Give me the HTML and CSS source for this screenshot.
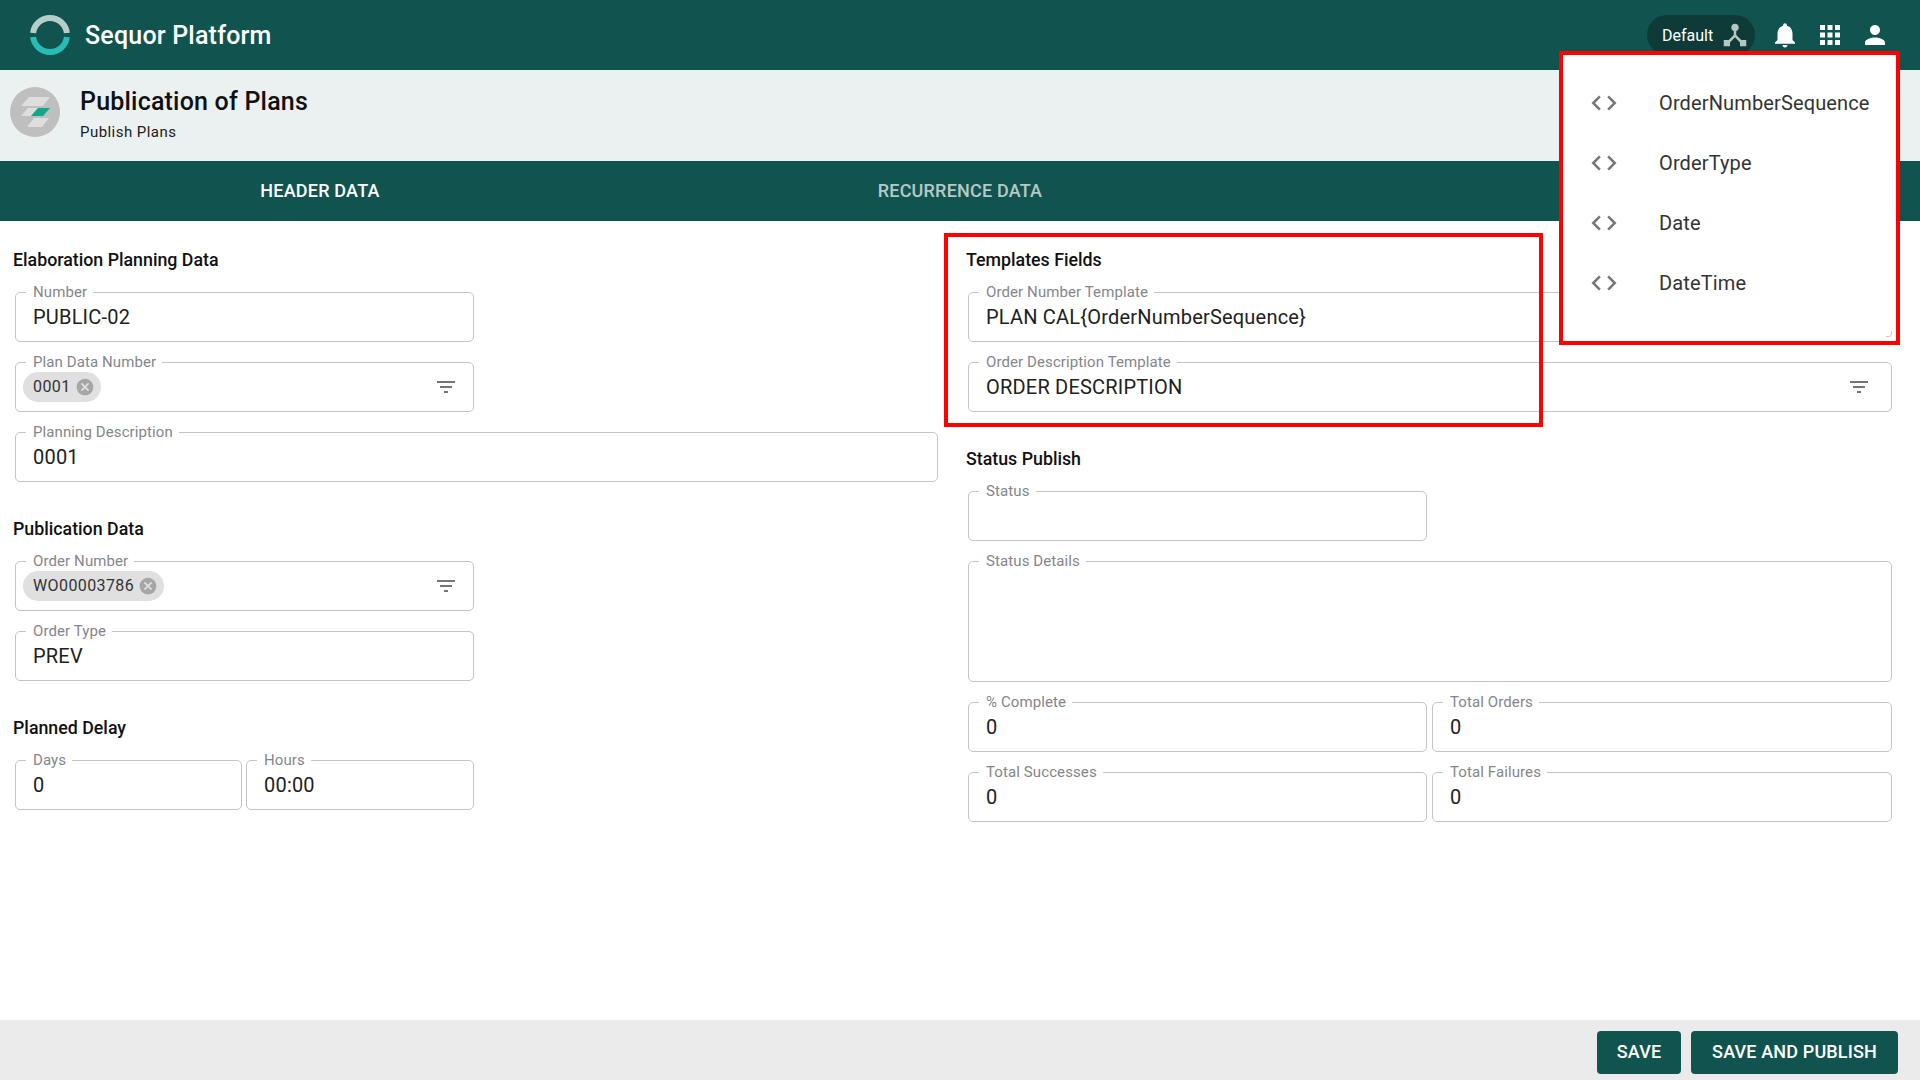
FILE: index.html
```html
<!DOCTYPE html>
<html lang="en">
<head>
  <meta charset="UTF-8" />
  <meta name="viewport" content="width=device-width, initial-scale=1.0"/>
  <title>Publication of Plans</title>
  <link rel="stylesheet" href="styles.css">
</head>
<body>

  <header class="topbar">
    <svg class="logo" viewBox="0 0 40 40">
      <path class="logo-top" d="M3.12 18A17 17 0 0 1 36.88 18"/>
      <path class="logo-bottom" d="M3.12 22A17 17 0 0 0 36.88 22"/>
    </svg>
    <div class="brand">Sequor Platform</div>
    <div class="topbar-right">
      <div class="env-pill">
        <span>Default</span>
        <svg class="icon icon-hub" viewBox="0 0 24 24"><path d="M17 16l-4-4V8.82C14.16 8.4 15 7.3 15 6c0-1.66-1.34-3-3-3S9 4.34 9 6c0 1.3.84 2.4 2 2.82V12l-4 4H3v5h5v-3.05l4-4.2 4 4.2V21h5v-5h-4z"/></svg>
      </div>
      <svg class="icon" viewBox="0 0 24 24"><path d="M12 22c1.1 0 2-.9 2-2h-4c0 1.1.89 2 2 2zm6-6v-5c0-3.07-1.64-5.64-4.5-6.32V4c0-.83-.67-1.5-1.5-1.5s-1.5.67-1.5 1.5v.68C7.63 5.36 6 7.92 6 11v5l-2 2v1h16v-1l-2-2z"/></svg>
      <svg class="icon" viewBox="0 0 24 24"><path d="M4 8h4V4H4v4zm6 12h4v-4h-4v4zm-6 0h4v-4H4v4zm0-6h4v-4H4v4zm6 0h4v-4h-4v4zm6-10v4h4V4h-4zm-6 4h4V4h-4v4zm6 6h4v-4h-4v4zm0 6h4v-4h-4v4z"/></svg>
      <svg class="icon" viewBox="0 0 24 24"><path d="M12 12c2.21 0 4-1.79 4-4s-1.79-4-4-4-4 1.79-4 4 1.79 4 4 4zm0 2c-2.67 0-8 1.34-8 4v2h16v-2c0-2.66-5.33-4-8-4z"/></svg>
    </div>
  </header>

  <div class="page-head">
    <svg class="avatar" viewBox="0 0 50 50">
      <circle cx="25" cy="25" r="25" fill="#bfbfbf"/>
      <polygon fill="#dedede" points="11,19 19,10 40,10 33,19"/>
      <polygon fill="#dedede" points="11,29 18,21 28,21 21,29"/>
      <polygon fill="#10a888" points="21,29 28,21 40,21 33,29"/>
      <polygon fill="#dedede" points="17,40 24,31 39,31 32,40"/>
    </svg>
    <div>
      <div class="page-title">Publication of Plans</div>
      <div class="page-sub">Publish Plans</div>
    </div>
  </div>

  <nav class="tabs">
    <div class="tab active">HEADER DATA</div>
    <div class="tab">RECURRENCE DATA</div>
    <div class="tab"></div>
  </nav>

  <main class="content">
    <div class="col">
      <h2 class="section-title">Elaboration Planning Data</h2>
      <div class="narrow">
        <div class="field"><span class="field-label">Number</span><span class="value">PUBLIC-02</span></div>
        <div class="field chip-field">
          <span class="field-label">Plan Data Number</span>
          <span class="chip"><span class="chip-text">0001</span>
            <svg class="chip-x" viewBox="0 0 24 24"><path d="M12 2C6.47 2 2 6.47 2 12s4.47 10 10 10 10-4.47 10-10S17.53 2 12 2zm5 13.59L15.59 17 12 13.41 8.41 17 7 15.59 10.59 12 7 8.41 8.41 7 12 10.59 15.59 7 17 8.41 13.41 12 17 15.59z"/></svg>
          </span>
          <svg class="filter" viewBox="0 0 24 24"><path d="M10 18h4v-2h-4v2zM3 6v2h18V6H3zm3 7h12v-2H6v2z"/></svg>
        </div>
      </div>
      <div class="field"><span class="field-label">Planning Description</span><span class="value">0001</span></div>

      <h2 class="section-title spaced">Publication Data</h2>
      <div class="narrow">
        <div class="field chip-field">
          <span class="field-label">Order Number</span>
          <span class="chip"><span class="chip-text">WO00003786</span>
            <svg class="chip-x" viewBox="0 0 24 24"><path d="M12 2C6.47 2 2 6.47 2 12s4.47 10 10 10 10-4.47 10-10S17.53 2 12 2zm5 13.59L15.59 17 12 13.41 8.41 17 7 15.59 10.59 12 7 8.41 8.41 7 12 10.59 15.59 7 17 8.41 13.41 12 17 15.59z"/></svg>
          </span>
          <svg class="filter" viewBox="0 0 24 24"><path d="M10 18h4v-2h-4v2zM3 6v2h18V6H3zm3 7h12v-2H6v2z"/></svg>
        </div>
        <div class="field"><span class="field-label">Order Type</span><span class="value">PREV</span></div>
      </div>

      <h2 class="section-title spaced">Planned Delay</h2>
      <div class="narrow pair">
        <div class="field"><span class="field-label">Days</span><span class="value">0</span></div>
        <div class="field"><span class="field-label">Hours</span><span class="value">00:00</span></div>
      </div>
    </div>

    <div class="col">
      <h2 class="section-title">Templates Fields</h2>
      <div class="field"><span class="field-label">Order Number Template</span><span class="value">PLAN CAL{OrderNumberSequence}</span></div>
      <div class="field">
        <span class="field-label">Order Description Template</span>
        <span class="value">ORDER DESCRIPTION</span>
        <svg class="filter filter-wide" viewBox="0 0 24 24"><path d="M10 18h4v-2h-4v2zM3 6v2h18V6H3zm3 7h12v-2H6v2z"/></svg>
      </div>

      <h2 class="section-title spaced">Status Publish</h2>
      <div class="narrow">
        <div class="field"><span class="field-label">Status</span></div>
      </div>
      <div class="field field-tall"><span class="field-label">Status Details</span></div>
      <div class="pair">
        <div class="field"><span class="field-label">% Complete</span><span class="value">0</span></div>
        <div class="field"><span class="field-label">Total Orders</span><span class="value">0</span></div>
      </div>
      <div class="pair">
        <div class="field"><span class="field-label">Total Successes</span><span class="value">0</span></div>
        <div class="field"><span class="field-label">Total Failures</span><span class="value">0</span></div>
      </div>
    </div>
  </main>

  <footer class="actions">
    <button class="btn">SAVE</button>
    <button class="btn btn-wide">SAVE AND PUBLISH</button>
  </footer>

  <div class="var-menu">
    <div class="var-item">
      <svg class="var-icon" viewBox="0 0 24 24"><path d="M9.4 16.6L4.8 12l4.6-4.6L8 6l-6 6 6 6 1.4-1.4zm5.2 0l4.6-4.6-4.6-4.6L16 6l6 6-6 6-1.4-1.4z"/></svg>
      <span>OrderNumberSequence</span>
    </div>
    <div class="var-item">
      <svg class="var-icon" viewBox="0 0 24 24"><path d="M9.4 16.6L4.8 12l4.6-4.6L8 6l-6 6 6 6 1.4-1.4zm5.2 0l4.6-4.6-4.6-4.6L16 6l6 6-6 6-1.4-1.4z"/></svg>
      <span>OrderType</span>
    </div>
    <div class="var-item">
      <svg class="var-icon" viewBox="0 0 24 24"><path d="M9.4 16.6L4.8 12l4.6-4.6L8 6l-6 6 6 6 1.4-1.4zm5.2 0l4.6-4.6-4.6-4.6L16 6l6 6-6 6-1.4-1.4z"/></svg>
      <span>Date</span>
    </div>
    <div class="var-item">
      <svg class="var-icon" viewBox="0 0 24 24"><path d="M9.4 16.6L4.8 12l4.6-4.6L8 6l-6 6 6 6 1.4-1.4zm5.2 0l4.6-4.6-4.6-4.6L16 6l6 6-6 6-1.4-1.4z"/></svg>
      <span>DateTime</span>
    </div>
    <svg class="grip" viewBox="0 0 6 6"><path d="M5.5 0v3a2.5 2.5 0 0 1-2.5 2.5H0"/></svg>
  </div>

  <div class="highlight"></div>

</body>
</html>
```

FILE: styles.css
```css
* {
  box-sizing: border-box;
}
html, body {
  height: 100%;
}
body {
  margin: 0;
  font-family: Roboto, sans-serif;
  color: #212121;
  background-color: #ffffff;
  display: flex;
  flex-direction: column;
  overflow: hidden;
}
.topbar {
  height: 70px;
  flex: none;
  background-color: #11544f;
  display: flex;
  align-items: center;
  padding: 0 30px;
  color: #ffffff;
}
.logo {
  width: 40px;
  height: 40px;
  fill: none;
  stroke-width: 6;
}
.logo-top {
  stroke: #b8cdca;
}
.logo-bottom {
  stroke: #26bdb5;
}
.brand {
  margin-left: 15px;
  font-size: 25px;
  font-weight: 500;
  letter-spacing: 0.2px;
}
.topbar-right {
  margin-left: auto;
  display: flex;
  align-items: center;
  gap: 15px;
}
.icon {
  width: 30px;
  height: 30px;
  fill: #ffffff;
  display: block;
}
.env-pill {
  height: 40px;
  width: 108px;
  border-radius: 20px;
  background-color: #0e3b38;
  display: flex;
  align-items: center;
  padding-left: 15px;
  gap: 7px;
  font-size: 16px;
}
.icon-hub {
  fill: #b7c6c3;
}
.page-head {
  height: 91px;
  flex: none;
  background-color: #ebf0f0;
  display: flex;
  align-items: flex-start;
  padding: 17px 0 0 10px;
  gap: 20px;
}
.avatar {
  width: 50px;
  height: 50px;
}
.page-title {
  font-size: 25px;
  font-weight: 500;
  letter-spacing: 0.2px;
  line-height: 30px;
  color: #111111;
}
.page-sub {
  font-size: 15px;
  letter-spacing: 0.45px;
  line-height: 20px;
  margin-top: 5px;
  color: #212121;
}
.tabs {
  height: 60px;
  flex: none;
  background-color: #11544f;
  display: grid;
  grid-template-columns: repeat(3, 1fr);
}
.tab {
  display: flex;
  align-items: center;
  justify-content: center;
  padding-bottom: 2px;
  font-size: 18px;
  font-weight: 500;
  letter-spacing: 0.2px;
  color: rgba(255,255,255,0.7);
}
.tab.active {
  color: #ffffff;
}
.content {
  flex: 1;
  display: grid;
  grid-template-columns: 925px 1fr;
  column-gap: 28px;
  padding: 29px 28px 0 13px;
  align-content: start;
}
.section-title {
  margin: 0 0 22px;
  font-size: 17.8px;
  font-weight: 500;
  line-height: 20px;
  color: #111111;
}
.section-title.spaced {
  margin-top: 37px;
}
.narrow {
  width: 461px;
}
.pair {
  display: grid;
  grid-template-columns: 459px 1fr;
  column-gap: 5px;
  margin: 20px 0 0 2px;
}
.narrow.pair {
  width: 459px;
  grid-template-columns: 227px 1fr;
  column-gap: 4px;
}
.field {
  position: relative;
  height: 50px;
  margin: 20px 0 0 2px;
  border: 1px solid #c4c4c4;
  border-radius: 5px;
  display: flex;
  align-items: center;
  padding: 0 17px;
}
.pair .field {
  min-width: 0;
  margin: 0;
}
.field-tall {
  height: 121px;
}
.field-label {
  position: absolute;
  top: -10px;
  left: 10px;
  padding: 0 6px 0 7px;
  background-color: #ffffff;
  font-size: 15px;
  letter-spacing: 0.1px;
  line-height: 18px;
  color: #85858c;
}
.value {
  font-size: 20px;
  letter-spacing: 0.2px;
  color: #212121;
}
.chip-field {
  padding-left: 7px;
}
.chip {
  height: 30px;
  border-radius: 15px;
  background-color: #e0e0e0;
  display: flex;
  align-items: center;
  padding: 0 6px 0 10px;
  gap: 4px;
  font-size: 16px;
  letter-spacing: 0.4px;
  color: #333333;
  white-space: nowrap;
}
.chip-text {
  margin-top: -2px;
}
.chip-x {
  width: 20px;
  height: 20px;
  fill: #a6a6a6;
}
.filter {
  width: 24px;
  height: 24px;
  margin-left: auto;
  margin-right: -2px;
  fill: #757575;
}
.filter-wide {
  margin-right: 3px;
}
.actions {
  height: 60px;
  flex: none;
  background-color: #ebebeb;
  display: flex;
  justify-content: flex-end;
  gap: 10px;
  padding: 11px 22px 0 0;
}
.btn {
  height: 43px;
  width: 84px;
  padding: 0 0 2px;
  border: 0;
  border-radius: 4px;
  background-color: #11544f;
  color: #ffffff;
  font-family: Roboto, sans-serif;
  font-size: 18px;
  font-weight: 500;
  letter-spacing: 0.15px;
}
.btn-wide {
  width: 207px;
}
.var-menu {
  position: absolute;
  top: 51px;
  left: 1559px;
  width: 341px;
  height: 294px;
  border: 4px solid #ff0000;
  background-color: #ffffff;
  padding: 18px 0 0 26px;
}
.var-item {
  height: 60px;
  display: flex;
  align-items: center;
  gap: 40px;
  font-size: 20px;
  letter-spacing: 0.13px;
  color: #333333;
}
.var-icon {
  width: 30px;
  height: 30px;
  fill: #757575;
}
.grip {
  position: absolute;
  right: 4px;
  bottom: 4px;
  width: 6px;
  height: 6px;
  fill: none;
  stroke: #cccccc;
}
.highlight {
  position: absolute;
  top: 233px;
  left: 944px;
  width: 599px;
  height: 194px;
  border: 4px solid #ff0000;
}
```
